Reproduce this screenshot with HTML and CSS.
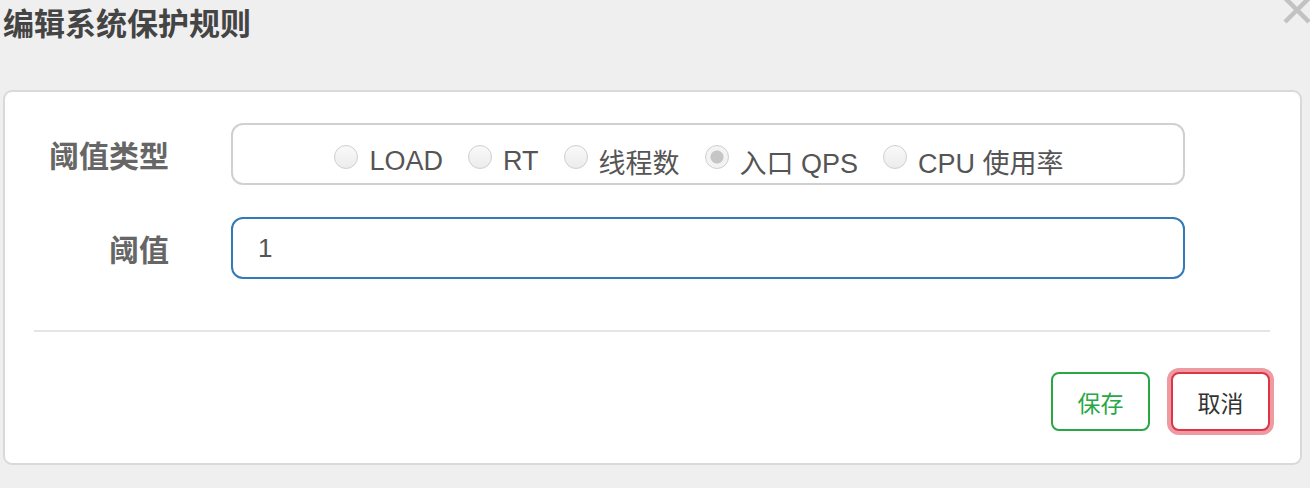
FILE: index.html
```html
<!DOCTYPE html>
<html lang="zh-CN">
  <head>
    <meta charset="UTF-8" />
    <meta name="viewport" content="width=device-width, initial-scale=1.0" />
    <link rel="stylesheet" href="styles.css">
    <title>编辑系统保护规则</title>
  </head>
  <body>
    <div class="modal">
      <div class="modal-header">
        <h4 class="modal-title">编辑系统保护规则</h4>
        <button class="close" type="button" aria-label="关闭">
          <svg width="28" height="28" viewBox="0 0 28 28">
            <path d="M2 2 L26 26 M26 2 L2 26" stroke="#c2c2c2" stroke-width="4.5" fill="none" />
          </svg>
        </button>
      </div>

      <div class="modal-body">
        <form class="form">
          <div class="form-row">
            <label class="control-label">阈值类型</label>
            <div class="radio-box">
              <label class="radio-inline"><input type="radio" name="grade" disabled />LOAD</label>
              <label class="radio-inline"><input type="radio" name="grade" disabled />RT</label>
              <label class="radio-inline"><input type="radio" name="grade" disabled />线程数</label>
              <label class="radio-inline"><input type="radio" name="grade" checked disabled />入口 QPS</label>
              <label class="radio-inline"><input type="radio" name="grade" disabled />CPU 使用率</label>
            </div>
          </div>

          <div class="form-row">
            <label class="control-label" for="count">阈值</label>
            <input class="form-control focused" id="count" type="text" value="1" />
          </div>
        </form>

        <hr class="divider" />

        <div class="modal-footer">
          <button class="btn btn-save" type="button">保存</button>
          <button class="btn btn-cancel" type="button">取消</button>
        </div>
      </div>
    </div>
  </body>
</html>
```

FILE: styles.css
```css
/* Base */
body {
  margin: 0;
  background: #efefef;
  font-family: "Liberation Sans", "Noto Sans CJK SC", sans-serif;
}

/* Header */
.modal-header {
  display: flex;
  justify-content: space-between;
  align-items: flex-start;
  height: 90px;
}
.modal-title {
  margin: 0;
  padding: 10px 0 0 3px;
  font-size: 31px;
  line-height: 30px;
  font-weight: 700;
  color: #444;
}
.close {
  background: none;
  border: 0;
  padding: 0;
  margin: -4px -1px 0 0;
  width: 28px;
  height: 28px;
  cursor: pointer;
}
.close svg {
  display: block;
}

/* Card */
.modal-body {
  margin-left: 3px;
  width: 1295px;
  background: #fff;
  border: 2px solid #d9d9d9;
  border-radius: 9px;
  padding: 31px 0 32px;
}

.form-row {
  display: flex;
  align-items: center;
  margin-bottom: 32px;
}
.control-label {
  width: 164px;
  text-align: right;
  margin-right: 62px;
  padding-top: 6px;
  font-size: 30px;
  font-weight: 700;
  color: #666;
  line-height: 30px;
}

.radio-box {
  box-sizing: border-box;
  width: 954px;
  height: 62px;
  border: 2px solid #d0d0d0;
  border-radius: 12px;
  display: flex;
  justify-content: center;
  align-items: center;
  padding: 14px 18px 0 0;
}
.radio-inline {
  display: flex;
  align-items: center;
  margin-right: 25px;
  font-size: 27px;
  color: #555;
  white-space: nowrap;
}
.radio-inline:last-child {
  margin-right: 0;
}
.radio-inline input {
  appearance: none;
  -webkit-appearance: none;
  box-sizing: border-box;
  width: 24px;
  height: 24px;
  margin: 0 11px 0 0;
  border: 1px solid #cfcfcf;
  border-radius: 50%;
  background: linear-gradient(#f9f9f9, #ececec);
  position: relative;
  top: -4px;
}
.radio-inline input:checked {
  background: radial-gradient(circle, #c6c6c6 0 6px, #f3f3f3 7px);
}

.form-control {
  box-sizing: border-box;
  width: 954px;
  height: 62px;
  margin: 0;
  padding: 0 25px;
  border: 2px solid #ccc;
  border-radius: 12px;
  font-family: "Liberation Sans", sans-serif;
  font-size: 26px;
  color: #555;
  outline: none;
}
.form-control.focused {
  border-color: #337ab7;
}

.divider {
  margin: 51px 30px 0 29px;
  border: 0;
  border-top: 2px solid #e5e5e5;
}

/* Footer */
.modal-footer {
  display: flex;
  justify-content: flex-end;
  gap: 21px;
  padding: 40px 30px 0 0;
}
.btn {
  box-sizing: border-box;
  width: 99px;
  height: 59px;
  background: #fff;
  border-radius: 8px;
  font-family: "Noto Sans CJK SC", sans-serif;
  font-size: 23px;
  cursor: pointer;
}
.btn-save {
  border: 2px solid #28a745;
  color: #28a745;
}
.btn-cancel {
  border: 2px solid #dc3545;
  color: #333;
  box-shadow: 0 0 0 4px rgba(220, 53, 69, 0.5);
}
```
